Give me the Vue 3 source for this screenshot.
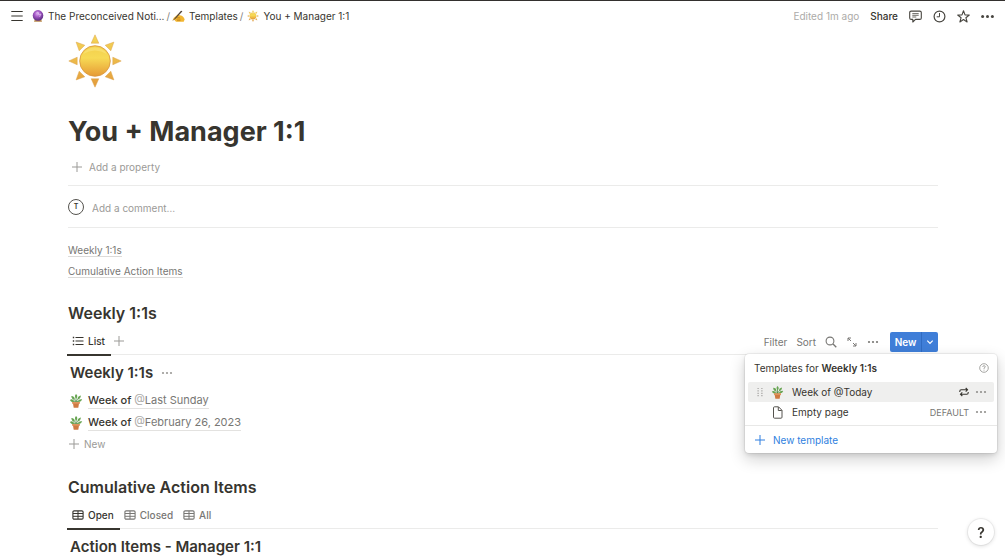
<script setup>
import { ref } from 'vue'

const weeks = ref([{ date: 'Last Sunday' }, { date: 'February 26, 2023' }])
const tabs = ['Open', 'Closed', 'All']
const activeTab = ref('Open')
</script>

<template>
  <div class="page">
    <svg class="defs" aria-hidden="true">
      <defs>
        <linearGradient id="sunFill" x1="0" y1="0" x2="0" y2="1">
          <stop offset="0" stop-color="#f3cf4c" />
          <stop offset=".4" stop-color="#f7da55" />
          <stop offset="1" stop-color="#e69a35" />
        </linearGradient>
        <linearGradient id="rayFill" gradientUnits="userSpaceOnUse" x1="0" y1="0" x2="0" y2="54">
          <stop offset="0" stop-color="#f5d858" />
          <stop offset="1" stop-color="#e39a3a" />
        </linearGradient>
        <radialGradient id="orbFill" cx=".45" cy=".35" r=".65">
          <stop offset="0" stop-color="#dcaaf0" />
          <stop offset=".45" stop-color="#a258c4" />
          <stop offset="1" stop-color="#5b2b80" />
        </radialGradient>
      </defs>
      <symbol id="sun" viewBox="0 0 54 54">
        <path d="M27 .8 30.8 9.200H23.200Z M53.200 27 44.800 30.800V23.200Z M27 53.200 23.200 44.800H30.800Z M.8 27 9.200 23.200V30.800Z M45.900 8.100 42.800 16.800 37.200 11.200Z M45.900 45.900 37.200 42.800 42.800 37.200Z M8.100 45.900 11.200 37.200 16.800 42.800Z M8.100 8.100 16.800 11.200 11.200 16.800Z" fill="url(#rayFill)" stroke="#dda34b" stroke-width=".5" />
        <circle cx="27" cy="27" r="15.300" fill="url(#sunFill)" stroke="#d9953a" stroke-width=".8" />
        <path d="M15 20a14 14 0 0 1 24 0Q27 13 15 20Z" fill="#fdeb8c" opacity=".45" />
      </symbol>
      <symbol id="plant" viewBox="0 0 14 14">
        <path d="M7 8.500V2M7 7.500 3.500 4M7 7.500 10.500 3.500M7 8 2.500 7M7 8 11.500 6.500" stroke="#4d8a40" stroke-width=".8" fill="none" />
        <path d="M7 .1Q9.400 2 7.400 4.600 4.700 2.500 7 .1ZM2.300 1.900Q5.900 2 5.800 5.400 2.500 5.300 2.300 1.900ZM11.900 1.500Q11.700 5.100 8.500 5.300 8.500 2 11.900 1.500ZM.9 5.900Q3.600 4.300 5.400 7.500 2.400 9 .9 5.900ZM13.200 5.300Q12 8.600 8.700 7.600 10 4.500 13.200 5.300Z" fill="#68a553" />
        <path d="M3.400 8h7.200v1.600h-.6L9.300 13.700H4.700L4 9.600H3.400Z" fill="#cf7a42" />
        <path d="M3.200 8h7.600v1.700H3.200Z" fill="#df945d" />
      </symbol>
      <symbol id="plus" viewBox="0 0 12 12">
        <path d="M6 1v10M1 6h10" stroke="currentColor" fill="none" />
      </symbol>
      <symbol id="dots" viewBox="0 0 12 12">
        <circle cx="2" cy="6" r="1.100" /><circle cx="6" cy="6" r="1.100" /><circle cx="10" cy="6" r="1.100" />
      </symbol>
      <symbol id="table" viewBox="0 0 12 12">
        <rect x=".9" y="1.900" width="10.200" height="8.200" rx="1.200" fill="none" stroke="currentColor" stroke-width="1.100" />
        <path d="M1 4.500h10M1 7.300h10M6 2v8" stroke="currentColor" fill="none" />
      </symbol>
    </svg>

    <header class="topbar">
      <button class="icon-btn" aria-label="Menu">
        <svg width="12" height="12" viewBox="0 0 12 12"><path d="M.3 1.500h11.400M.3 6h11.400M.3 10.500h11.400" stroke="currentColor" stroke-width="1.200" /></svg>
      </button>
      <nav class="crumbs" aria-label="Breadcrumb">
        <a href="#" class="crumb">
          <svg width="12" height="12" viewBox="0 0 12 12"><path d="M3 9h6l1 2.700H2Z" fill="#b98a4c" /><circle cx="6" cy="5.400" r="5.300" fill="url(#orbFill)" /><path d="M4.200 3.200 6 2l1 3 2-1-1.500 3" stroke="#ead0f6" stroke-width=".6" fill="none" /></svg>
          <span>The Preconceived Noti...</span>
        </a>
        <span class="slash">/</span>
        <a href="#" class="crumb">
          <svg width="13" height="12" viewBox="0 0 13 12">
            <path d="M.3 10.800Q1.500 7 4 6L6 4.200Q7.300 3.700 7 5L9.800 5.800Q11.500 6.700 12.700 9.200L11.700 11.700H4L2 9.500Z" fill="#f2b632" />
            <path d="M4 7.200 8 7.800M4.500 9 8.500 9.200M5 10.600 8.500 10.500" stroke="#b87816" stroke-width=".6" />
            <path d="M.4 10.900 8.500 1.300Q9.900.2 10.300 1.500L3.500 8.700Z" fill="#51443a" />
          </svg>
          <span>Templates</span>
        </a>
        <span class="slash">/</span>
        <a href="#" class="crumb last">
          <svg width="12" height="12"><use href="#sun" /></svg>
          <span>You + Manager 1:1</span>
        </a>
      </nav>
      <div class="actions">
        <span class="edited">Edited 1m ago</span>
        <button class="share">Share</button>
        <button class="icon-btn" aria-label="Comments">
          <svg width="13" height="13" viewBox="0 0 13 13"><path d="M2.200 1.100h8.600q1.500 0 1.500 1.500v5.300q0 1.500-1.500 1.500H6.500L3.800 12V9.400H2.200Q.7 9.400.7 7.900v-5.300Q.7 1.100 2.200 1.100Z" fill="none" stroke="currentColor" stroke-width="1.100" stroke-linejoin="round" /><path d="M3.300 3.600h6.400M3.300 5.300h6.400M3.300 7h4" stroke="currentColor" stroke-width=".8" /></svg>
        </button>
        <button class="icon-btn" aria-label="History">
          <svg width="13" height="13" viewBox="0 0 13 13"><circle cx="6.500" cy="6.500" r="5.400" fill="none" stroke="currentColor" stroke-width="1.200" /><path d="M6.500 3v3.800H3.700" fill="none" stroke="currentColor" /></svg>
        </button>
        <button class="icon-btn" aria-label="Favorite">
          <svg width="13" height="13" viewBox="0 0 13 13"><path d="M6.500.8 8 4.900 12.300 5 8.900 7.700 10.100 12 6.500 9.500 2.900 12 4.100 7.700.7 5 5 4.900Z" fill="none" stroke="currentColor" stroke-width="1.100" stroke-linejoin="round" /></svg>
        </button>
        <button class="icon-btn" aria-label="More">
          <svg width="13" height="13" viewBox="0 0 13 13"><circle cx="1.600" cy="6.500" r="1.500" /><circle cx="6.500" cy="6.500" r="1.500" /><circle cx="11.400" cy="6.500" r="1.500" /></svg>
        </button>
      </div>
    </header>

    <main class="content">
      <svg class="hero" width="54" height="54"><use href="#sun" /></svg>
      <h1>You + Manager 1:1</h1>
      <div class="property-row">
        <button class="text-btn"><svg width="12" height="12"><use href="#plus" /></svg>Add a property</button>
      </div>
      <div class="comment-row">
        <span class="avatar">T</span>
        <input type="text" placeholder="Add a comment…" aria-label="Add a comment" />
      </div>
      <nav class="links" aria-label="Contents">
        <a href="#weekly">Weekly 1:1s</a>
        <a href="#cumulative">Cumulative Action Items</a>
      </nav>

      <section>
        <h2 id="weekly">Weekly 1:1s</h2>
        <div class="viewbar">
          <button class="tab active">
            <svg width="12" height="12" viewBox="0 0 12 12"><path d="M3.500 2.500h8M3.500 6h8M3.500 9.500h8" stroke="currentColor" stroke-width="1.100" /><path d="M.8 2.500h1.400M.8 6h1.400M.8 9.500h1.400" stroke="currentColor" stroke-width="1.300" /></svg>
            List
          </button>
          <button class="icon-btn add-view" aria-label="Add view"><svg width="12" height="12"><use href="#plus" /></svg></button>
          <div class="tools">
            <button>Filter</button>
            <button>Sort</button>
            <button class="icon-btn" aria-label="Search"><svg width="12" height="12" viewBox="0 0 12 12"><circle cx="5" cy="5" r="3.900" fill="none" stroke="currentColor" stroke-width="1.100" /><path d="m8 8 3.300 3.300" stroke="currentColor" stroke-width="1.300" /></svg></button>
            <button class="icon-btn" aria-label="Expand"><svg width="12" height="12" viewBox="0 0 12 12"><path d="M2 5V2h3M2 2l3 3M10 7v3H7M10 10 7 7" fill="none" stroke="currentColor" /></svg></button>
            <button class="icon-btn" aria-label="View options"><svg width="12" height="12"><use href="#dots" /></svg></button>
            <div class="new-group">
              <button class="new-btn">New</button>
              <button class="new-arrow" aria-label="Choose template"><svg width="8" height="8" viewBox="0 0 8 8"><path d="m1.300 2.700 2.700 2.700 2.700-2.700" fill="none" stroke="currentColor" stroke-width="1.200" /></svg></button>
              <div class="popover">
                <div class="pop-head">
                  <span>Templates for <b>Weekly 1:1s</b></span>
                  <button class="icon-btn" aria-label="About templates"><svg width="10" height="10" viewBox="0 0 10 10"><circle cx="5" cy="5" r="4.300" fill="none" stroke="currentColor" stroke-width=".8" /><path d="M3.700 3.900Q3.800 2.700 5 2.700T6.300 3.800Q6.300 4.500 5 5.100V5.900M5 6.700v.9" fill="none" stroke="currentColor" stroke-width=".8" /></svg></button>
                </div>
                <div class="pop-item hovered">
                  <svg class="grip" width="8" height="10" viewBox="0 0 8 10"><path d="M1.500 1.500h1.200M5.300 1.500h1.200M1.500 3.900h1.200M5.300 3.900h1.200M1.500 6.300h1.200M5.300 6.300h1.200M1.500 8.700h1.200M5.300 8.700h1.200" stroke="currentColor" stroke-width="1.200" /></svg>
                  <svg width="13" height="13"><use href="#plant" /></svg>
                  <button class="pop-name">Week of @Today</button>
                  <svg width="10" height="10" viewBox="0 0 10 10"><path d="M.8 5V4.200Q.8 2.800 2.200 2.800H8.300M6.700 1 8.500 2.800 6.700 4.600M9.200 5v.8Q9.200 7.200 7.800 7.200H1.700M3.300 5.400 1.500 7.200 3.300 9" fill="none" stroke="currentColor" stroke-width="1.100" /></svg>
                  <button class="icon-btn" aria-label="Template options"><svg width="12" height="12"><use href="#dots" /></svg></button>
                </div>
                <div class="pop-item">
                  <span class="grip"></span>
                  <svg class="doc" width="13" height="13" viewBox="0 0 13 13"><path d="M3.500.8h4L11 4.300v6.900q0 1-1 1H3.500q-1 0-1-1V1.800q0-1 1-1ZM7.300 1v3.500h3.500" fill="none" stroke="currentColor" stroke-linejoin="round" /></svg>
                  <button class="pop-name">Empty page</button>
                  <span class="default">DEFAULT</span>
                  <button class="icon-btn" aria-label="Template options"><svg width="12" height="12"><use href="#dots" /></svg></button>
                </div>
                <button class="new-template"><svg width="12" height="12"><use href="#plus" /></svg>New template</button>
              </div>
            </div>
          </div>
        </div>
        <h3>Weekly 1:1s <button class="icon-btn" aria-label="Title options"><svg width="12" height="12"><use href="#dots" /></svg></button></h3>
        <ul class="weeks">
          <li v-for="week in weeks" :key="week.date">
            <svg width="14" height="14"><use href="#plant" /></svg>
            <a href="#">Week of <span class="mention"><i>@</i>{{ week.date }}</span></a>
          </li>
        </ul>
        <button class="text-btn new-row"><svg width="12" height="12"><use href="#plus" /></svg>New</button>
      </section>

      <section class="second">
        <h2 id="cumulative">Cumulative Action Items</h2>
        <div class="viewbar">
          <button v-for="tab in tabs" :key="tab" class="tab" :class="{ active: tab === activeTab }" @click="activeTab = tab">
            <svg width="12" height="12"><use href="#table" /></svg>{{ tab }}
          </button>
        </div>
        <h3>Action Items - Manager 1:1</h3>
      </section>
    </main>

    <button class="help" aria-label="Help">?</button>
  </div>
</template>

<style>
body {
  margin: 0;
  background: #fff;
}
</style>

<style scoped>
* {
  box-sizing: border-box;
}
.page {
  height: 100vh;
  overflow: hidden;
  border-top: 1px solid #33302e;
  font-family: Inter, "Liberation Sans", sans-serif;
  font-size: 10px;
  color: #37352f;
}
.defs {
  position: absolute;
  width: 0;
  height: 0;
}
svg {
  display: block;
  flex: none;
  fill: currentColor;
}
button {
  padding: 0;
  border: 0;
  background: none;
  font: inherit;
  color: inherit;
  white-space: nowrap;
}
a {
  color: inherit;
  text-decoration: none;
}
.icon-btn {
  display: flex;
  align-items: center;
}
.topbar {
  display: flex;
  align-items: center;
  height: 30px;
  padding: 0 11px;
}
.crumbs {
  display: flex;
  align-items: center;
  margin-left: 9px;
}
.crumb {
  display: flex;
  align-items: center;
  gap: 4px;
}
.slash {
  margin: 0 2px;
  color: #84827d;
}
.last {
  margin-left: 2px;
}
.actions {
  display: flex;
  align-items: center;
  gap: 11px;
  margin-left: auto;
  color: #484640;
}
.edited {
  color: #acaba8;
}
.share {
  font-weight: 500;
  color: #37352f;
}
.content {
  padding: 3px 67px 0 68px;
}
.hero {
  margin-bottom: 26px;
}
h1,
h2,
h3 {
  margin: 0;
}
h1 {
  font-size: 27px;
  line-height: 36px;
  font-weight: 700;
}
.property-row {
  display: flex;
  margin-top: 5px;
  padding: 0 0 6px 3px;
  border-bottom: 1px solid #ebebea;
}
.text-btn {
  display: flex;
  align-items: center;
  gap: 6px;
  height: 24px;
  color: #9b9a97;
}
.comment-row {
  display: flex;
  align-items: center;
  gap: 8px;
  height: 42px;
  border-bottom: 1px solid #ebebea;
}
.avatar {
  display: grid;
  place-items: center;
  width: 16px;
  height: 16px;
  border: 1px solid #55534e;
  border-radius: 50%;
  font-size: 7px;
  font-weight: 600;
}
.comment-row input {
  flex: 1;
  padding: 2px 0 0;
  border: 0;
  outline: 0;
  background: none;
  font: inherit;
}
.comment-row input::placeholder {
  color: #9b9a97;
}
.links {
  display: flex;
  flex-direction: column;
  align-items: flex-start;
  gap: 8px;
  margin-top: 16px;
  color: #787774;
}
.links a {
  line-height: 12px;
  border-bottom: 1px solid #dcdbd9;
}
h2 {
  margin-top: 23px;
  font-size: 16px;
  line-height: 24px;
  font-weight: 600;
}
.viewbar {
  display: flex;
  height: 30px;
  padding-top: 3px;
  border-bottom: 1px solid #ebebea;
  color: #787774;
}
.tab {
  display: flex;
  align-items: center;
  gap: 4px;
  height: 28px;
  margin-left: -1px;
  padding: 0 6px 0 5px;
  border-bottom: 2px solid transparent;
  font-weight: 500;
}
.tab.active {
  border-color: #37352f;
  color: #37352f;
}
.add-view {
  height: 26px;
  margin-left: 2px;
  color: #9b9a97;
}
.tools {
  display: flex;
  align-items: center;
  gap: 9px;
  height: 28px;
  margin-left: auto;
}
.new-group {
  position: relative;
  display: flex;
  height: 20px;
  margin-left: 2px;
  border-radius: 2px;
  background: #3f7ed8;
  color: #fff;
}
.new-btn {
  width: 32px;
  border-right: 1px solid #2f6bc2;
  font-weight: 600;
}
.new-arrow {
  display: grid;
  place-items: center;
  width: 16px;
}
.popover {
  position: absolute;
  top: 22px;
  right: -59px;
  z-index: 2;
  width: 252px;
  border-radius: 4px;
  background: #fff;
  box-shadow: 0 0 0 1px #0f0f0f0d, 0 2px 4px #0f0f0f1a, 0 6px 16px #0f0f0f33;
  color: #37352f;
}
.pop-head {
  display: flex;
  align-items: center;
  justify-content: space-between;
  height: 28px;
  padding: 0 8px 0 9px;
}
.pop-head b {
  font-weight: 600;
}
.pop-head .icon-btn {
  color: #91908d;
}
.pop-item {
  display: flex;
  align-items: center;
  height: 20px;
  margin: 0 3px;
  padding: 0 7px 0 8px;
  border-radius: 2px;
}
.hovered {
  background: #efefee;
}
.grip {
  width: 8px;
  margin-right: 7px;
  color: #a3a29f;
}
.doc {
  color: #55534e;
}
.pop-name {
  flex: 1;
  margin-left: 8px;
  text-align: left;
}
.pop-item .icon-btn {
  margin-left: 6px;
  color: #91908d;
}
.default {
  font-size: 9px;
  color: #787774;
}
.new-template {
  display: flex;
  align-items: center;
  gap: 7px;
  width: 100%;
  height: 28px;
  margin-top: 3px;
  padding: 0 9px;
  border-top: 1px solid #e8e8e7;
  color: #2f7fe0;
}
h3 {
  display: flex;
  align-items: center;
  gap: 8px;
  margin-top: 8px;
  padding-left: 2px;
  font-size: 15px;
  line-height: 20px;
  font-weight: 600;
}
h3 .icon-btn {
  color: #9b9a97;
}
.weeks {
  margin: 7px 0 0;
  padding: 0 0 0 1px;
  list-style: none;
  font-size: 11px;
  font-weight: 500;
}
.weeks li {
  display: flex;
  align-items: center;
  gap: 5px;
  height: 22px;
}
.weeks a {
  line-height: 15px;
  border-bottom: 1px solid #e3e2e0;
}
.mention {
  font-weight: 400;
  color: #787774;
}
.mention i {
  font-style: normal;
  color: #acaba8;
}
.new-row {
  gap: 4px;
  height: 20px;
}
.second h2 {
  margin-top: 21px;
}
.help {
  position: fixed;
  right: 11px;
  bottom: 11px;
  width: 26px;
  height: 26px;
  border-radius: 50%;
  background: #fff;
  box-shadow: 0 0 0 1px #0f0f0f0d, 0 1px 4px #0f0f0f26;
  font-size: 14px;
  font-weight: 600;
}
</style>
